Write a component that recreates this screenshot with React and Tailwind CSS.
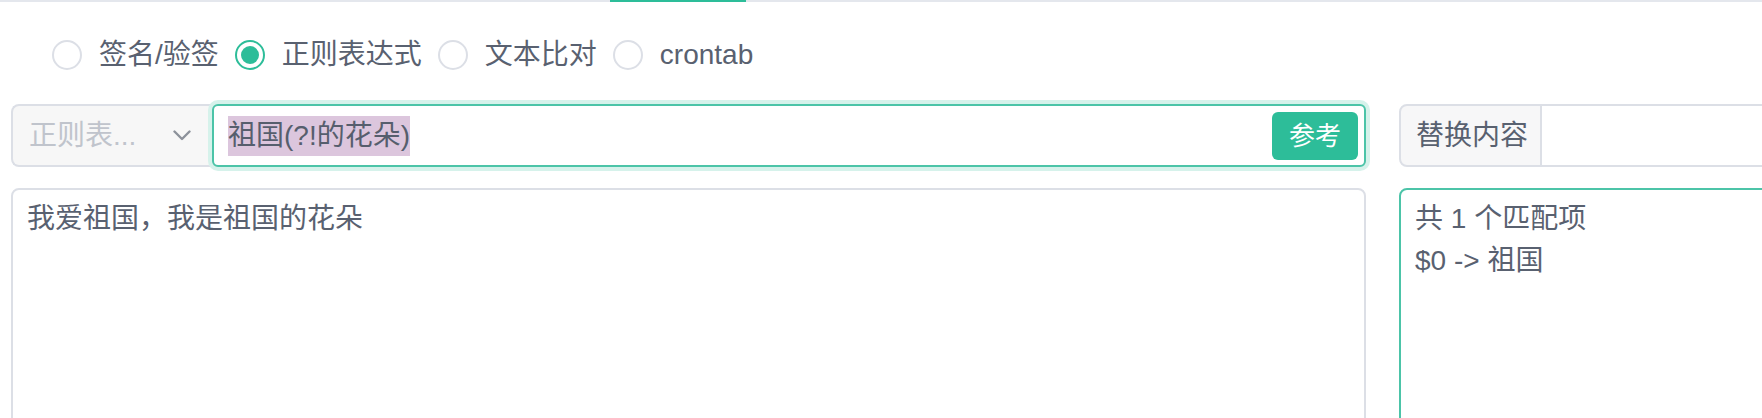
import React, { useState } from 'react';

const modes = [
  { key: 'sign', label: '签名/验签' },
  { key: 'regex', label: '正则表达式' },
  { key: 'diff', label: '文本比对' },
  { key: 'cron', label: 'crontab' },
];

// Radio with the teal ring + filled dot when checked
const Radio = ({ label, checked, onClick }) => (
  <div className="flex items-center mr-[16px] cursor-pointer" onClick={onClick}>
    {checked ? (
      <span className="flex items-center justify-center w-[30px] h-[30px] rounded-full border-2 border-[#2dbd99] bg-white">
        <span className="w-[18px] h-[18px] rounded-full bg-[#2dbd99]" />
      </span>
    ) : (
      <span className="w-[30px] h-[30px] rounded-full border-2 border-[#dcdfe6] bg-white" />
    )}
    <span className="ml-[17px] text-[28px] leading-[30px] text-[#596170]">{label}</span>
  </div>
);

const App = () => {
  const [mode, setMode] = useState('regex');
  const [text] = useState('我爱祖国，我是祖国的花朵');

  return (
    <div className="w-[1762px] h-[418px] overflow-hidden bg-white text-[#596170] font-['Liberation_Sans','Noto_Sans_CJK_SC',sans-serif]">
      {/* tab bar bottom line */}
      <div className="flex h-[2px] bg-[#e4e7ed]">
        <div className="ml-[610px] w-[136px] h-[2px] bg-[#2dbd99]" />
      </div>

      {/* mode radios */}
      <div className="flex items-center mt-[38px] pl-[52px]">
        {modes.map(m => (
          <Radio key={m.key} label={m.label} checked={mode === m.key} onClick={() => setMode(m.key)} />
        ))}
      </div>

      {/* pattern row */}
      <div className="flex mt-[34px] pl-[11px]">
        <div className="flex shrink-0 w-[1355px] h-[63px]">
          <div className="flex shrink-0 items-center justify-between w-[201px] h-full pl-[16px] pr-[21px] bg-[#f7f7f7] border-2 border-r-0 border-[#dcdfe6] rounded-l-[8px]">
            <span className="text-[28px] text-[#c0c4cc] whitespace-nowrap">正则表...</span>
            <svg width="18" height="11" viewBox="0 0 18 11" fill="none">
              <polyline points="1.5,1.5 9,9 16.5,1.5" stroke="#8d929b" strokeWidth="2.4" strokeLinecap="round" strokeLinejoin="round" />
            </svg>
          </div>
          <div className="flex flex-1 items-center justify-between h-full pl-[14px] pr-[6px] bg-white border-2 border-[#4cc4a8] rounded-[6px] shadow-[0_0_0_4px_#d6f2eb]">
            <span className="inline-block h-[40px] leading-[40px] text-[28px] bg-[#dcc6dd] text-[#565e6d]">祖国(?!的花朵)</span>
            <button className="h-[48px] px-[17px] rounded-[6px] bg-[#2dbd99] text-white text-[26px] leading-[48px]">参考</button>
          </div>
        </div>
        <div className="flex shrink-0 ml-[33px] w-[1355px] h-[63px]">
          <div className="flex items-center h-full pl-[15px] pr-[12px] bg-[#f7f7f8] border-2 border-[#dcdfe6] rounded-l-[8px] text-[28px] whitespace-nowrap">
            替换内容
          </div>
          <div className="flex-1 h-full bg-white border-2 border-l-0 border-[#dcdfe6] rounded-r-[8px]" />
        </div>
      </div>

      {/* text areas */}
      <div className="flex mt-[21px] pl-[11px]">
        <div className="shrink-0 w-[1355px] h-[300px] pt-[8px] px-[14px] border-2 border-[#dcdfe6] rounded-[8px] text-[28px] leading-[42px]">
          {text}
        </div>
        <div className="shrink-0 ml-[33px] w-[1355px] h-[300px] pt-[8px] px-[14px] border-2 border-[#4cc4a8] rounded-[8px] text-[28px] leading-[42px]">
          <div>共 1 个匹配项</div>
          <div>$0 -&gt; 祖国</div>
        </div>
      </div>
    </div>
  );
};

export default App;
